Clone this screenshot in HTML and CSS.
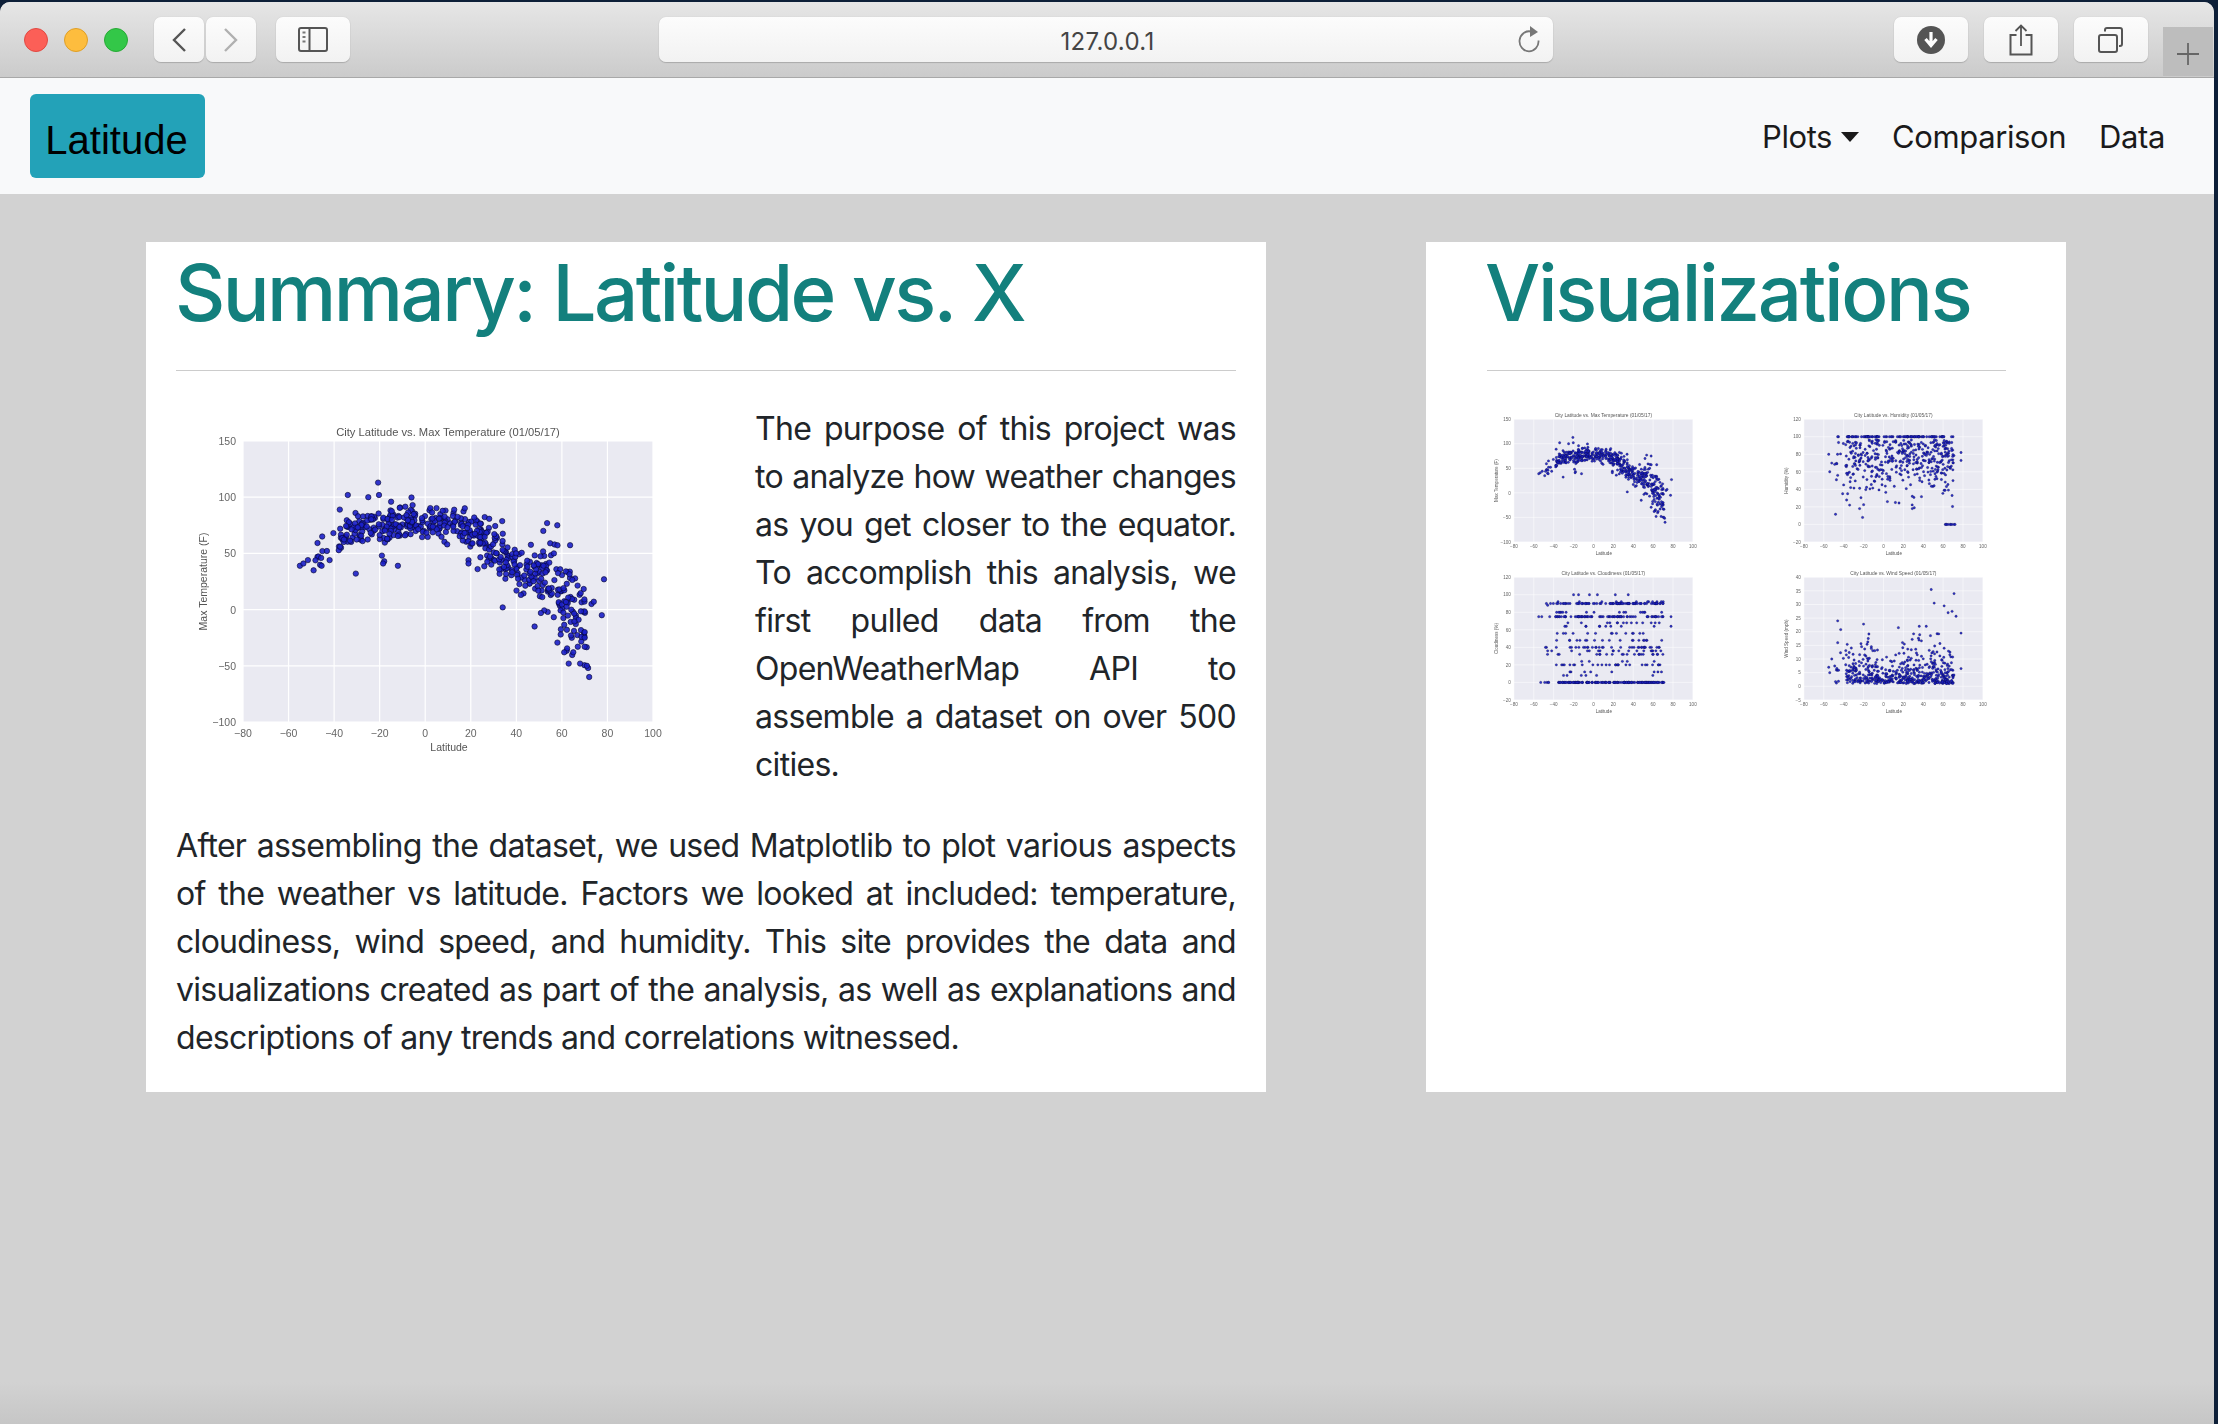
FILE: index.html
```html
<!DOCTYPE html>
<html lang="en">
<head>
    <meta charset="UTF-8">
    <title>Latitude</title>
    <link rel="stylesheet" href="styles.css">
</head>
<body>
    <div class="window">
        <!-- Browser toolbar -->
        <div class="toolbar">
            <div class="lights">
                <span class="light red"></span>
                <span class="light yellow"></span>
                <span class="light green"></span>
            </div>
            <div class="nav-buttons">
                <span class="tool-btn arrow-btn">
                    <svg width="14" height="24" viewBox="0 0 14 24"><path d="M13 1 2 12l11 11" fill="none" stroke="#555" stroke-width="2.4"/></svg>
                </span>
                <span class="tool-btn arrow-btn">
                    <svg width="14" height="24" viewBox="0 0 14 24"><path d="m1 1 11 11L1 23" fill="none" stroke="#b0b0b0" stroke-width="2.4"/></svg>
                </span>
            </div>
            <span class="tool-btn wide-btn sidebar-btn">
                <svg width="30" height="25" viewBox="0 0 30 25">
                    <rect x="1" y="1" width="28" height="23" rx="2" fill="none" stroke="#555" stroke-width="2"/>
                    <path d="M11.500 1v23" stroke="#555" stroke-width="2"/>
                    <path d="M4.500 5.500h3M4.500 10h3M4.500 14.500h3" stroke="#777" stroke-width="2"/>
                </svg>
            </span>
            <div class="address">
                <span class="address-text">127.0.0.1</span>
                <svg class="reload" width="24" height="28" viewBox="0 0 24 28">
                    <path d="M14 6.500A9.500 10 0 1 0 21.500 15.500" fill="none" stroke="#777" stroke-width="1.800"/>
                    <path d="M13 1l8 6-8 5z" fill="#777"/>
                </svg>
            </div>
            <div class="tool-group">
                <span class="tool-btn wide-btn">
                    <svg width="28" height="28" viewBox="0 0 28 28">
                        <circle cx="14" cy="14" r="14" fill="#555"/>
                        <path d="M14 6v12M8.500 13l5.500 6.500 5.500-6.500" fill="none" stroke="#fff" stroke-width="3.200"/>
                    </svg>
                </span>
                <span class="tool-btn wide-btn">
                    <svg width="24" height="32" viewBox="0 0 24 32">
                        <path d="M7.500 11H1.500v19.500h21V11h-6" fill="none" stroke="#555" stroke-width="2"/>
                        <path d="M12 22V2M6.500 7 12 1.500 17.500 7" fill="none" stroke="#555" stroke-width="1.800"/>
                    </svg>
                </span>
                <span class="tool-btn wide-btn">
                    <svg width="26" height="26" viewBox="0 0 26 26">
                        <rect x="1" y="8" width="18" height="17" rx="2" fill="none" stroke="#555" stroke-width="2"/>
                        <path d="M7 4.500V3a2 2 0 0 1 2-2h13a2 2 0 0 1 2 2v14a2 2 0 0 1-2 2h-1" fill="none" stroke="#555" stroke-width="2"/>
                    </svg>
                </span>
            </div>
            <span class="new-tab">
                <svg width="24" height="24" viewBox="0 0 24 24"><path d="M12 1v22M1 12h22" stroke="#666" stroke-width="1.800"/></svg>
            </span>
        </div>

        <!-- Site navbar -->
        <nav class="navbar">
            <a class="brand" href="#">Latitude</a>
            <div class="nav-links">
                <a href="#" class="dropdown">Plots<span class="caret"></span></a>
                <a href="#">Comparison</a>
                <a href="#">Data</a>
            </div>
        </nav>

        <main class="content">
            <section class="card summary">
                <h1>Summary: Latitude vs. X</h1>
                <hr>
                <div class="intro">
                    <div class="plot big-plot" data-plot="temp"></div>
                    <p>The purpose of this project was to analyze how weather changes as you get closer to the equator. To accomplish this analysis, we first pulled data from the OpenWeatherMap API to assemble a dataset on over 500 cities.</p>
                </div>
                <p class="outro">After assembling the dataset, we used Matplotlib to plot various aspects of the weather vs latitude. Factors we looked at included: temperature, cloudiness, wind speed, and humidity. This site provides the data and visualizations created as part of the analysis, as well as explanations and descriptions of any trends and correlations witnessed.</p>
            </section>
            <section class="card visuals">
                <h1>Visualizations</h1>
                <hr>
                <div class="thumbs">
                    <div class="plot thumb" data-plot="temp"></div>
                    <div class="plot thumb" data-plot="humidity"></div>
                    <div class="plot thumb" data-plot="cloud"></div>
                    <div class="plot thumb" data-plot="wind"></div>
                </div>
            </section>
        </main>
    </div>
    <script src="plots.js"></script>
</body>
</html>
```

FILE: styles.css
```css
/* page and window */
body {
    margin: 0;
    height: 1424px;
    overflow: hidden;
    background-color: #0d1f38;
    font-family: Inter, "Noto Sans", sans-serif;
    color: #212529;
}
.window {
    width: 2214px;
    height: 1422px;
    margin-top: 2px;
    display: flex;
    flex-direction: column;
    border-radius: 10px 10px 0 0;
    overflow: hidden;
    background: linear-gradient(to bottom, #d2d2d2 0, #d2d2d2 1380px, #c6c6c6 100%);
}

/* browser toolbar */
.toolbar {
    height: 76px;
    flex: none;
    box-sizing: border-box;
    display: flex;
    align-items: flex-start;
    padding-top: 15px;
    background: linear-gradient(to bottom, #e6e6e6, #cbcbcb);
    border-bottom: 1px solid #a8a8a8;
}
.lights {
    display: flex;
    gap: 16px;
    margin: 11px 0 0 24px;
}
.light {
    width: 24px;
    height: 24px;
    border-radius: 50%;
    box-sizing: border-box;
}
.red { background-color: #fc5f57; border: 1px solid #e14942; }
.yellow { background-color: #fdbd3e; border: 1px solid #df9f27; }
.green { background-color: #33c748; border: 1px solid #27aa35; }
.nav-buttons {
    display: flex;
    gap: 2px;
    margin-left: 26px;
}
.tool-btn {
    height: 45px;
    box-sizing: border-box;
    display: flex;
    align-items: center;
    justify-content: center;
    background: linear-gradient(to bottom, #fcfcfc, #f2f2f2);
    border-radius: 7px;
    box-shadow: 0 1px 1px #aaa, 0 0 1px #bbb;
}
.arrow-btn { width: 50px; }
.wide-btn { width: 74px; }
.sidebar-btn { margin-left: 20px; }
.address {
    position: relative;
    width: 894px;
    height: 45px;
    margin-left: 309px;
    display: flex;
    align-items: center;
    justify-content: center;
    background: linear-gradient(to bottom, #fcfcfc, #f2f2f2);
    border-radius: 7px;
    box-shadow: 0 1px 1px #aaa, 0 0 1px #bbb;
}
.address-text {
    font-size: 24px;
    letter-spacing: 0.3px;
    color: #444;
    padding: 3px 0 0 3px;
}
.reload {
    position: absolute;
    right: 12px;
    top: 8px;
}
.tool-group {
    display: flex;
    gap: 16px;
    margin-left: 341px;
}
.new-tab {
    width: 50px;
    height: 49px;
    margin: 10px 0 0 15px;
    display: flex;
    align-items: center;
    justify-content: center;
    padding-top: 4px;
    box-sizing: border-box;
    background-color: #bdbdbd;
}

/* site navbar */
.navbar {
    height: 116px;
    flex: none;
    box-sizing: border-box;
    display: flex;
    align-items: center;
    justify-content: space-between;
    padding: 0 49px 0 30px;
    background-color: #f8f9fa;
}
.brand {
    width: 175px;
    height: 84px;
    box-sizing: border-box;
    padding: 8px 2px 0 0;
    display: flex;
    align-items: center;
    justify-content: center;
    background-color: #23a2b8;
    border-radius: 6px;
    color: #000;
    font-family: "Liberation Sans", Arial, sans-serif;
    font-size: 40px;
    text-decoration: none;
}
.nav-links {
    display: flex;
    gap: 33px;
    align-items: center;
    padding-top: 1px;
}
.nav-links a {
    color: #1a1a1a;
    font-size: 31px;
    letter-spacing: -0.4px;
    text-decoration: none;
}
.dropdown {
    display: flex;
    align-items: center;
}
.caret {
    width: 0;
    height: 0;
    margin-left: 9px;
    border-top: 10px solid #1a1a1a;
    border-left: 9px solid transparent;
    border-right: 9px solid transparent;
}

/* cards */
.content {
    display: flex;
    gap: 160px;
    padding: 48px 0 0 146px;
}
.card {
    height: 850px;
    box-sizing: border-box;
    background-color: #fff;
}
.summary {
    width: 1120px;
    padding: 0 30px;
}
.visuals {
    width: 640px;
    padding: 0 60px 0 61px;
}
h1 {
    margin: 1px 0 0;
    font-size: 78px;
    line-height: 100px;
    font-weight: 500;
    letter-spacing: -2.6px;
    color: #13807d;
}
.summary h1 {
    margin-left: -1px;
}
.visuals h1 {
    margin-left: -2px;
    letter-spacing: -2.3px;
}
hr {
    margin: 27px 0 34px;
    border: 0;
    border-top: 1px solid #ccc;
}
p {
    margin: 0;
    font-size: 32px;
    line-height: 48px;
    letter-spacing: -0.7px;
    text-align: justify;
    color: #212529;
}
.intro {
    display: flex;
    align-items: flex-start;
}
.intro p {
    width: 482px;
}
.outro {
    margin-top: 33px;
}

/* plots */
.plot svg {
    display: block;
    width: 100%;
    height: 100%;
}
.big-plot {
    width: 497px;
    height: 345px;
    flex: none;
    margin: 13px 72px 0 10px;
    filter: blur(0.5px);
}
.thumbs {
    display: grid;
    grid-template-columns: 217px 217px;
    column-gap: 73px;
    row-gap: 7px;
    padding: 4px 0 0 2px;
}
.thumb {
    height: 151px;
    filter: blur(0.6px);
}
.tick {
    font-family: "Liberation Sans", Arial, sans-serif;
    font-size: 10.5px;
    fill: #666;
}
.label {
    font-family: "Liberation Sans", Arial, sans-serif;
    font-size: 10.5px;
    fill: #555;
}
.title {
    font-family: "Liberation Sans", Arial, sans-serif;
    font-size: 11.2px;
    fill: #555;
}
```

FILE: plots.js
```js
// Scatter plots drawn from generated weather data
const FIG_W = 497, FIG_H = 345;
const AX = { x: 57, y: 23, w: 410, h: 281 };

// small seeded random so the picture is the same every time
let seed = 4711;
function rnd() {
    seed = (seed * 1664525 + 1013904223) % 4294967296;
    return seed / 4294967296;
}
function gauss() {
    return (rnd() + rnd() + rnd() + rnd() - 2) / 0.58;
}

const lats = [];
for (let i = 0; i < 520; i++) {
    const r = rnd();
    if (r < 0.015) lats.push(-50 + rnd() * 10);
    else if (r < 0.28) lats.push(-38 + rnd() * 35);
    else if (r < 0.47) lats.push(-3 + rnd() * 25);
    else lats.push(22 + rnd() * 50);
}

function tempCurve(lat) {
    const pts = [[-55, 39], [-45, 52], [-35, 68], [-20, 74], [0, 77], [15, 76], [25, 66], [32, 50], [40, 38], [50, 30], [60, 13], [66, 4], [72, -15]];
    for (let i = 1; i < pts.length; i++) {
        if (lat <= pts[i][0]) {
            const a = pts[i - 1], b = pts[i];
            return a[1] + (b[1] - a[1]) * (lat - a[0]) / (b[0] - a[0]);
        }
    }
    return -15;
}

const tempData = lats.map(lat => {
    const spread = lat < 25 ? 7.5 : lat < 50 ? 11 : 20;
    return [lat, tempCurve(lat) + gauss() * spread];
}).concat([
    [-20.7, 113], [-20.3, 102], [-34, 102], [-25, 100], [-15, 96], [-37.5, 89], [53.5, 77], [58, 75],
    [56.5, 50], [-30.5, 32], [-12, 39], [-18, 43], [-19, 48], [-18.5, 41], [-55, 39], [-53.5, 41], [-51.5, 44],
    [-45.5, 39], [-45.7, 46], [-42, 44], [72, -60], [71.5, -52], [71, -50], [48, -15], [34, 2], [78.5, 27],
    [77.5, -5], [73, 5], [74, 7], [19, 44], [19, 41], [23, 36], [70, -33], [67, -33], [63, -48], [68, -48],
    [65, -38], [61, -38], [70, -25], [64, -23], [70, -20]
]);

const humidityData = lats.map(lat => {
    const r = rnd();
    if (lat > 62 && r < 0.1) return [lat, 0];
    if (r < 0.18) return [lat, 100];
    return [lat, Math.min(100, 97 - Math.abs(gauss()) * 28)];
}).concat([[-21, 8], [-24, 18], [-34, 22], [29, 18], [31, 19], [-40, 45], [-41, 35], [-36, 35], [-33, 42],
    [63, 0], [65, 0], [67, 0], [69, 0], [71, 0], [72, 0], [61, 39], [62, 39], [69, 33], [4, 26], [12, 25],
    [-55, 80], [-54, 60], [-52, 70], [-46, 100], [-46, 56], [78, 82], [78, 73]]);

const cloudRows = [[0, 62], [90, 28], [75, 24], [20, 12], [40, 14], [80, 6], [92, 4], [68, 7], [64, 4], [56, 6], [48, 8], [36, 8], [32, 6], [24, 2], [12, 4], [8, 5]];
const cloudTotal = cloudRows.reduce((sum, row) => sum + row[1], 0);
const cloudData = lats.map(lat => {
    let r = rnd() * cloudTotal, i = 0;
    while (i < cloudRows.length - 1 && r > cloudRows[i][1]) {
        r -= cloudRows[i][1];
        i++;
    }
    return [lat, cloudRows[i][0]];
}).concat([[-20, 100], [-15, 100], [-4, 100], [4, 100], [22, 100], [35, 100], [-55, 75], [-52, 75], [-44, 75],
    [-46, 88], [-46, 36], [-42, 36], [-53, 0], [78, 75], [78, 64]]);

const windData = lats.map(lat => {
    const u = rnd();
    return [lat, 1 + -Math.log(1 - u * 0.98) * (lat > -5 && lat < 15 ? 3.4 : 5)];
}).concat([[48, 35.5], [71, 34], [51, 30.5], [61, 29.5], [69, 27.5], [65, 27], [73, 25.7], [-46, 24], [-20, 22.8], [-43, 20.8], [15, 21.5], [78, 19.5], [36, 22], [43, 22], [-55, 7], [-54, 5], [-52, 10], [-46, 16], [78, 6.5]]);

const PLOTS = {
    temp: { title: 'City Latitude vs. Max Temperature (01/05/17)', ylabel: 'Max Temperature (F)', y: [-100, 150, 50], data: tempData },
    humidity: { title: 'City Latitude vs. Humidity (01/05/17)', ylabel: 'Humidity (%)', y: [-20, 120, 20], data: humidityData },
    cloud: { title: 'City Latitude vs. Cloudiness (01/05/17)', ylabel: 'Cloudiness (%)', y: [-20, 120, 20], data: cloudData },
    wind: { title: 'City Latitude vs. Wind Speed (01/05/17)', ylabel: 'Wind Speed (mph)', y: [-5, 40, 5], data: windData }
};

function drawPlot(el) {
    const plot = PLOTS[el.dataset.plot];
    const [ymin, ymax, ystep] = plot.y;
    const sx = v => AX.x + (v + 80) / 180 * AX.w;
    const sy = v => AX.y + AX.h - (v - ymin) / (ymax - ymin) * AX.h;
    let svg = `<svg viewBox="0 0 ${FIG_W} ${FIG_H}">`;
    svg += `<rect x="${AX.x}" y="${AX.y}" width="${AX.w}" height="${AX.h}" fill="#eaeaf2"/>`;
    for (let v = -80; v <= 100; v += 20) {
        const x = sx(v);
        svg += `<line x1="${x}" x2="${x}" y1="${AX.y}" y2="${AX.y + AX.h}" stroke="#fff" stroke-width="1.2"/>`;
        svg += `<text class="tick" x="${x}" y="${AX.y + AX.h + 15}" text-anchor="middle">${String(v).replace('-', '\u2212')}</text>`;
    }
    for (let v = ymin; v <= ymax; v += ystep) {
        const y = sy(v);
        svg += `<line x1="${AX.x}" x2="${AX.x + AX.w}" y1="${y}" y2="${y}" stroke="#fff" stroke-width="1.2"/>`;
        svg += `<text class="tick" x="${AX.x - 7}" y="${y + 4}" text-anchor="end">${String(v).replace('-', '\u2212')}</text>`;
    }
    plot.data.forEach(p => {
        if (p[1] < ymin || p[1] > ymax || p[0] > 100) return;
        svg += `<circle cx="${sx(p[0]).toFixed(1)}" cy="${sy(p[1]).toFixed(1)}" r="2.7" fill="#1c20c8" fill-opacity="0.9" stroke="#05052a" stroke-width="0.6"/>`;
    });
    svg += `<text class="title" x="${AX.x + AX.w / 2}" y="18" text-anchor="middle">${plot.title}</text>`;
    svg += `<text class="label" x="${AX.x + AX.w / 2 + 1}" y="333" text-anchor="middle">Latitude</text>`;
    svg += `<text class="label" transform="translate(21 ${AX.y + AX.h / 2}) rotate(-90)" text-anchor="middle">${plot.ylabel}</text>`;
    svg += '</svg>';
    el.innerHTML = svg;
}

document.querySelectorAll('.plot').forEach(drawPlot);
```
